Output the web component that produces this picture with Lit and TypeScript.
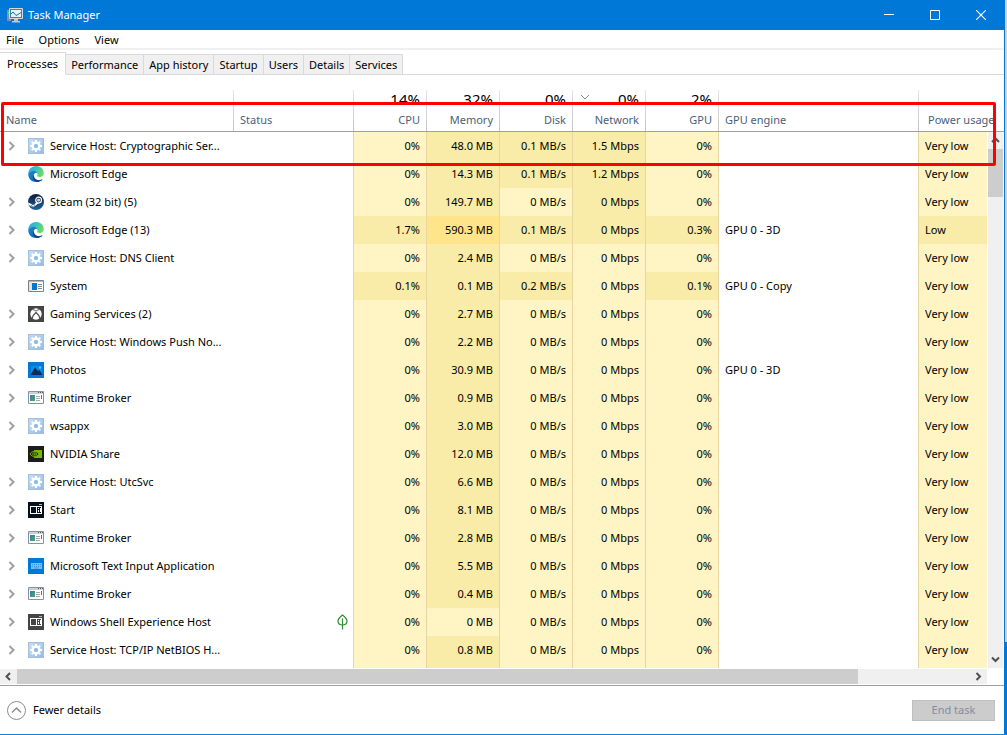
import { LitElement, html, svg, css, nothing } from "lit";
import { customElement } from "lit/decorators.js";
import { classMap } from "lit/directives/class-map.js";

type Level = 0 | 1 | 2;
interface Proc {
  name: string;
  icon: string;
  expandable: boolean;
  leaf?: boolean;
  values: string[];
  levels: Level[];
  engine?: string;
  power: string;
}

const p = (
  name: string,
  icon: string,
  expandable: boolean,
  values: string[],
  levels: Level[],
  engine = "",
  power = "Very low",
  leaf = false
): Proc => ({ name, icon, expandable, values, levels, engine, power, leaf });

const idle = (mem: string) => ["0%", mem, "0 MB/s", "0 Mbps", "0%"];
const base: Level[] = [0, 1, 0, 0, 0];

const PROCESSES: Proc[] = [
  p("Service Host: Cryptographic Ser...", "gear", true, ["0%", "48.0 MB", "0.1 MB/s", "1.5 Mbps", "0%"], [0, 1, 1, 1, 0]),
  p("Microsoft Edge", "edge", false, ["0%", "14.3 MB", "0.1 MB/s", "1.2 Mbps", "0%"], [0, 1, 1, 1, 0]),
  p("Steam (32 bit) (5)", "steam", true, idle("149.7 MB"), [0, 1, 0, 1, 0]),
  p("Microsoft Edge (13)", "edge", true, ["1.7%", "590.3 MB", "0.1 MB/s", "0 Mbps", "0.3%"], [1, 2, 1, 1, 1], "GPU 0 - 3D", "Low"),
  p("Service Host: DNS Client", "gear", true, idle("2.4 MB"), base),
  p("System", "system", false, ["0.1%", "0.1 MB", "0.2 MB/s", "0 Mbps", "0.1%"], [1, 1, 1, 0, 1], "GPU 0 - Copy"),
  p("Gaming Services (2)", "xbox", true, idle("2.7 MB"), base),
  p("Service Host: Windows Push No...", "gear", true, idle("2.2 MB"), base),
  p("Photos", "photos", true, idle("30.9 MB"), base, "GPU 0 - 3D"),
  p("Runtime Broker", "broker", true, idle("0.9 MB"), base),
  p("wsappx", "gear", true, idle("3.0 MB"), base),
  p("NVIDIA Share", "nvidia", false, idle("12.0 MB"), base),
  p("Service Host: UtcSvc", "gear", true, idle("6.6 MB"), base),
  p("Start", "start", true, idle("8.1 MB"), base),
  p("Runtime Broker", "broker", true, idle("2.8 MB"), base),
  p("Microsoft Text Input Application", "keyboard", true, idle("5.5 MB"), base),
  p("Runtime Broker", "broker", true, idle("0.4 MB"), base),
  p("Windows Shell Experience Host", "shell", true, idle("0 MB"), [0, 0, 0, 0, 0], "", "Very low", true),
  p("Service Host: TCP/IP NetBIOS H...", "gear", true, idle("0.8 MB"), base),
];

const METRICS = [
  { label: "CPU", total: "14%" },
  { label: "Memory", total: "32%" },
  { label: "Disk", total: "0%" },
  { label: "Network", total: "0%", sorted: true },
  { label: "GPU", total: "2%" },
];

const TABS = ["Processes", "Performance", "App history", "Startup", "Users", "Details", "Services"];

const panel = (bg: string) => svg`
  <rect width="16" height="16" fill="${bg}"/>
  <path d="M2 4h12v8H2zM3 5v6h5V5zM9 5v6h4V5z" fill="#fff" fill-rule="evenodd"/>
  <path d="M10 6h1v1h-1zM10 8h1v2h-1zM12 6h1v4h-1z" fill="#fff"/>
  <path d="M11 2h3v1h-3z" fill="#aab4c0"/>`;

const ICONS: Record<string, unknown> = {
  gear: svg`
    <defs><linearGradient id="gb" x1="0" y1="0" x2="1" y2="1"><stop offset="0" stop-color="#c3dcf4"/><stop offset="1" stop-color="#92bde8"/></linearGradient></defs>
    <rect x=".5" y=".5" width="15" height="15" fill="url(#gb)" stroke="#a9bfd6"/>
    <g stroke="#fff" stroke-width="2" fill="none"><circle cx="8" cy="8" r="3.400" stroke-width="2.600"/>
    <path d="M8 2v2.500M8 11.500v2.500M2 8h2.500M11.500 8h2.500M3.700 3.700l1.700 1.700M10.600 10.600l1.700 1.700M3.700 12.300l1.700-1.700M10.600 5.400l1.700-1.700"/></g>
    <circle cx="8" cy="8" r="2.100" fill="#8fbaea"/>`,
  edge: svg`
    <defs>
      <linearGradient id="e1" x1="0" y1="0" x2="1" y2=".4"><stop offset="0" stop-color="#2aa5dc"/><stop offset=".5" stop-color="#35c1c5"/><stop offset="1" stop-color="#67dc62"/></linearGradient>
      <linearGradient id="e2" x1="0" y1="0" x2="1" y2="1"><stop offset="0" stop-color="#1b8ad8"/><stop offset="1" stop-color="#1556a8"/></linearGradient>
    </defs>
    <path d="M.2 7.500C.6 3.200 4 .1 8.200.1c4.300 0 7.600 3.200 7.600 6.800 0 2.500-1.900 4.100-4 4.100-1.800 0-2.700-.6-2.700-1.200 0-.4.6-.7.600-1.900C9.700 6.200 8 5 5.800 5 3 5 1 6.300.2 7.500z" fill="url(#e1)"/>
    <path d="M.2 7.500C1 6 3 4.700 5.600 4.700c2.300 0 4.100 1.500 4.100 3.200-.6-.9-1.500-1.200-2.200-1-1.400.6-2 1.900-1.800 3.400.3 3 3.300 4.500 6 3.800 1-.2 1.700-.6 2.300-.9-1.400 1.900-3.500 2.800-5.900 2.800C3.700 16 0 12.500.2 7.500z" fill="url(#e2)"/>
    <path d="M6.200 8.300c-1 3 1.400 6 5 5.900 1.100 0 2-.4 2.700-.9.400-.3.800.1.500.5C13 15.400 10.800 16 9.300 15.900 6 15.500 3.500 12 6.200 8.300z" fill="#133f83"/>`,
  steam: svg`
    <defs><linearGradient id="sb" x1="0" y1="0" x2="0" y2="1"><stop offset="0" stop-color="#10193c"/><stop offset="1" stop-color="#1d6597"/></linearGradient></defs>
    <circle cx="8" cy="8" r="8" fill="url(#sb)"/>
    <path d="M0 8.600l5.200 2.200 3.400-2.400.3-3 4.400 3.200-3.200.8-3 2.500A2.300 2.300 0 0 1 3 12L.6 11z" fill="#fff"/>
    <circle cx="10.600" cy="6.100" r="2.900" fill="#1a2850" stroke="#fff" stroke-width="1.200"/>
    <circle cx="10.600" cy="6.100" r="1.600" fill="#c8d2de"/>
    <circle cx="5.200" cy="11.600" r="1.500" fill="none" stroke="#1b3c68" stroke-width=".7"/>`,
  system: svg`
    <path d="M.5 2.500h15v11H.5z" fill="#fff" stroke="#808080"/><path d="M1 3h14v1H1z" fill="#b8b8b8"/>
    <path d="M1 4h3v9H1z" fill="#e3e3e3"/>
    <path d="M4 5h5v7H4z" fill="#0078d7"/><path d="M10 6.500h4M10 8.500h4M10 10.500h4" stroke="#888"/>`,
  xbox: svg`
    <rect width="16" height="16" fill="#454545"/><circle cx="8" cy="8" r="5.700" fill="#fff"/>
    <path d="M4.500 3.700C6 3.600 7.200 4.500 8 5.200c.8-.7 2-1.600 3.500-1.500" fill="none" stroke="#454545"/>
    <path d="M4 12.600C4.600 10 6.600 7.600 8 6.500c1.400 1.100 3.400 3.500 4 6.100" fill="none" stroke="#454545" stroke-width="1.200"/>`,
  photos: svg`
    <rect width="16" height="16" fill="#0078d7"/><path d="M3 4h11v9H3z" fill="#1389e2"/>
    <path d="M3 12l4-6.500 3 3.500 1.500-1L14 12v1H3z" fill="#0b2b58"/><path d="M11 4.500h2v2h-2z" fill="#5cc8f5"/>`,
  broker: svg`
    <defs><linearGradient id="bb" x1="0" y1="0" x2="1" y2="1"><stop offset="0" stop-color="#3c78b8"/><stop offset="1" stop-color="#4aa866"/></linearGradient></defs>
    <path d="M.5 1.500h15v12H.5z" fill="#fff" stroke="#8b9299"/><path d="M1 2h14v2H1z" fill="#cbd1d7"/>
    <path d="M10 2h1v1h-1zM12 2h1v1h-1zM14 2h1v1h-1z" fill="#4f5a66"/>
    <path d="M2 5h5v6H2z" fill="url(#bb)"/><path d="M8 6.500h4M8 8.500h4M8 10.500h4" stroke="#a8a8a8"/><path d="M13.500 5v4" stroke="#5d7488"/>`,
  nvidia: svg`
    <rect width="16" height="16" fill="#1c1c1c"/><path d="M6 4h8v8H6z" fill="#76b900"/>
    <path d="M2 8c2-3.200 6-3.600 9-.1-2.500 3.600-6.500 3.500-9 .1z" fill="#1c1c1c" stroke="#76b900" stroke-width=".9"/>
    <path d="M4.300 8c1.200-1.700 3.300-1.700 4.700 0-1.300 1.600-3.400 1.600-4.700 0z" fill="none" stroke="#76b900" stroke-width=".9"/><circle cx="6.600" cy="8" r=".8" fill="#76b900"/>`,
  start: panel("#02101f"),
  shell: panel("#454545"),
  keyboard: svg`
    <rect width="16" height="16" fill="#0078d7"/><path d="M3 5h11v6H3z" fill="#7cbef0"/>
    <path d="M4 6.500h9M4 8.500h9" stroke="#3a98e2" stroke-dasharray="1 1"/><path d="M6 10h5" stroke="#3a98e2"/>`,
};

@customElement("app-root")
export class AppRoot extends LitElement {
  static styles = css`
    :host {
      display: block;
      height: 100vh;
      font: 11px/16px "Noto Sans", "Open Sans", sans-serif;
      color: #000;
    }
    * { box-sizing: border-box; }
    button { font: inherit; color: inherit; background: none; border: 0; margin: 0; padding: 0; }
    svg { display: block; flex: none; }
    .desktop { display: flex; height: 100%; background: linear-gradient(#d0d0d0 642px, #0078d7 642px); padding-right: 2px; }
    .window {
      flex: 1; min-width: 0; display: flex; flex-direction: column; background: #fff;
      border-right: 1px solid #0078d7; border-bottom: 1px solid #1883d7;
    }
    .titlebar { display: flex; align-items: center; height: 30px; background: #0078d7; color: #fff; padding-left: 7px; }
    .title { flex: 1; margin: 0 0 0 5px; font-size: 11px; font-weight: 400; }
    .caption { width: 46px; height: 30px; display: grid; place-items: center; }
    .menu { display: flex; height: 20px; padding-left: 6px; gap: 15px; border-bottom: 2px solid #f0f0f0; }
    .menu button { height: 20px; }
    .tabs { display: flex; align-items: flex-end; height: 25px; padding-top: 2px; }
    .tabs::after { content: ""; flex: 1; border-bottom: 1px solid #d9d9d9; }
    .tab { height: 21px; padding: 0 5px; background: #f0f0f0; border: 1px solid #d9d9d9; border-left: 0; }
    .tab.selected { height: 23px; padding: 0 7px; background: #fff; border-bottom-color: #fff; line-height: 20px; }
    .grid { position: relative; flex: 1; min-height: 0; margin-top: 15px; display: flex; }
    .view { flex: 1; min-width: 0; }
    table { width: 100%; table-layout: fixed; border-collapse: separate; border-spacing: 0; }
    .c-status { width: 120px; }
    .c-metric { width: 73px; }
    .c-engine { width: 200px; }
    .c-power { width: 69px; }
    th { height: 42px; padding: 0; font-weight: 400; text-align: left; vertical-align: top; border-bottom: 1px solid #a0a0a0; color: #4c607a; white-space: nowrap;
      background: linear-gradient(#e5e5e5, #c4c4c4) no-repeat 0 0 / 1px 100%; }
    th.first { background: none; }
    .head { display: flex; flex-direction: column; width: 100%; text-align: left; padding: 0 0 0 7px; }
    .first .head { padding-left: 6px; }
    .last .head { padding-left: 10px; }
    .metric .head { text-align: right; padding: 0 6px 0 8px; }
    .total { display: flex; align-items: flex-start; height: 14px; overflow: hidden; font-size: 15px; line-height: 18px; color: #000; }
    .total svg { margin-top: 4px; }
    .total span { flex: 1; }
    .label { height: 27px; line-height: 32px; }
    td { height: 28px; padding: 0; white-space: nowrap; }
    .proc { display: flex; align-items: center; padding-left: 7px; }
    .expander { width: 9px; height: 16px; margin-right: 12px; display: grid; place-items: center; }
    .proc .text { margin-left: 6px; }
    .status { padding-right: 5px; }
    .status svg { margin-left: auto; }
    .num { text-align: right; padding-right: 6px; background: #fff4c4; border-left: 1px solid #e8d5a0; }
    .txt { padding-left: 6px; border-left: 1px solid #e8d5a0; }
    .heat { background: #fff4c4; }
    .l1 { background: #f9eca8; }
    .l2 { background: #ffe48a; }
    .rest { height: 4px; }
    .vscroll { width: 17px; padding-left: 1px; display: flex; flex-direction: column; }
    .headgap { height: 42px; margin-left: -1px; border-bottom: 1px solid #a0a0a0; }
    .vtrack { flex: 1; width: 15px; display: flex; flex-direction: column; background: #f0f0f0; }
    .arrow { flex: none; width: 17px; height: 17px; display: grid; place-items: center; }
    .vtrack .arrow { width: 15px; }
    .vthumb { height: 48px; background: #cdcdcd; }
    .vspace { flex: 1; }
    .hscroll { display: flex; height: 15px; margin: 1px 17px 1px 0; background: #f0f0f0; }
    .hscroll .arrow { height: 15px; }
    .htrack { flex: 1; }
    .hthumb { width: 88.25%; height: 15px; background: #cdcdcd; }
    .highlight { position: absolute; top: 12px; left: 1px; right: 8px; height: 64px; border: 3px solid #fe0000; border-radius: 2px; pointer-events: none; }
    .footer { display: flex; align-items: center; justify-content: space-between; height: 49px; padding: 0 9px 0 7px; border-top: 1px solid #a0a0a0; }
    .fewer { display: flex; align-items: center; gap: 7px; }
    .end { width: 83px; height: 21px; background: #ccc; border: 1px solid #bfbfbf; color: #838ba0; }
  `;

  private chevron(d: string, w: number, h: number, color: string, sw = 2) {
    return html`<svg width=${w} height=${h} viewBox="0 0 ${w} ${h}" fill="none" stroke=${color} stroke-width=${sw}><path d=${d}/></svg>`;
  }

  private row(r: Proc) {
    return html`<tr>
      <td>
        <div class="proc">
          ${r.expandable
            ? html`<button class="expander" aria-label="Expand ${r.name}">${this.chevron("M1.500 1l4 4-4 4", 8, 10, "#a0a0a0")}</button>`
            : html`<span class="expander"></span>`}
          <svg width="16" height="16" viewBox="0 0 16 16" aria-hidden="true">${ICONS[r.icon]}</svg>
          <span class="text">${r.name}</span>
        </div>
      </td>
      <td class="status">
        ${r.leaf
          ? html`<svg width="11" height="16" viewBox="0 0 11 16" fill="none" stroke="#2f8a2f" stroke-width="1.200"><path d="M5.500 1C3 3 1 4.500 1 7s2 4 4.500 4S10 9.500 10 7 8 3 5.500 1zM5.500 4.500v11"/></svg>`
          : nothing}
      </td>
      ${r.values.map((v, i) => html`<td class=${classMap({ num: true, l1: r.levels[i] === 1, l2: r.levels[i] === 2 })}>${v}</td>`)}
      <td class="txt">${r.engine}</td>
      <td class=${classMap({ txt: true, heat: true, l1: r.power === "Low" })}>${r.power}</td>
    </tr>`;
  }

  render() {
    return html`<div class="desktop"><div class="window">
      <header class="titlebar">
        <svg width="16" height="16" viewBox="0 0 16 16" aria-hidden="true">
          <path d="M0 3h4v11H0z" fill="#8a9299"/><path d="M1 5h1v2H1z" fill="#5ee04c"/>
          <path d="M2.500 1.500h13v10h-13z" fill="#2d87b8" stroke="#d8d8d8"/><path d="M4 3h10v7H4z" fill="#e4f4fb"/>
          <path d="M4 7l2-2 3 3.500 2-1 3-2" fill="none" stroke="#1e6f9c"/>
          <path d="M7 12h4v2H7zM5 14h8v1.500H5z" fill="#c4c4c4"/>
        </svg>
        <h1 class="title">Task Manager</h1>
        <button class="caption" aria-label="Minimize"><svg width="10" height="10"><path d="M0 4h10v1H0z" fill="#fff"/></svg></button>
        <button class="caption" aria-label="Maximize"><svg width="10" height="10"><path d="M.5.5h9v9h-9z" fill="none" stroke="#fff"/></svg></button>
        <button class="caption" aria-label="Close"><svg width="10" height="10"><path d="M0 0l10 10M10 0L0 10" stroke="#fff" stroke-width="1.200"/></svg></button>
      </header>
      <nav class="menu"><button>File</button><button>Options</button><button>View</button></nav>
      <div class="tabs" role="tablist">
        ${TABS.map((t, i) => html`<button role="tab" aria-selected=${i === 0} class=${classMap({ tab: true, selected: i === 0 })}>${t}</button>`)}
      </div>
      <main class="grid">
        <div class="view">
          <table>
            <colgroup>
              <col /><col class="c-status" />
              ${METRICS.map(() => html`<col class="c-metric" />`)}
              <col class="c-engine" /><col class="c-power" />
            </colgroup>
            <thead><tr>
              <th class="first"><button class="head"><span class="total"></span><span class="label">Name</span></button></th>
              <th><button class="head"><span class="total"></span><span class="label">Status</span></button></th>
              ${METRICS.map((m) => html`<th class="metric"><button class="head">
                <span class="total">${m.sorted ? this.chevron("M1 1l4 4 4-4", 10, 7, "#76859a", 1) : nothing}<span>${m.total}</span></span>
                <span class="label">${m.label}</span></button></th>`)}
              <th><button class="head"><span class="total"></span><span class="label">GPU engine</span></button></th>
              <th class="last"><button class="head"><span class="total"></span><span class="label">Power usage</span></button></th>
            </tr></thead>
            <tbody>
              ${PROCESSES.map((r) => this.row(r))}
              <tr>
                <td class="rest"></td><td class="rest"></td>
                ${base.map((l) => html`<td class=${classMap({ num: true, rest: true, l1: l === 1 })}></td>`)}
                <td class="txt rest"></td><td class="txt heat rest"></td>
              </tr>
            </tbody>
          </table>
        </div>
        <div class="vscroll">
          <div class="headgap"></div>
          <div class="vtrack">
            <button class="arrow" aria-label="Scroll up">${this.chevron("M1 5l3.500-3.500L8 5", 9, 7, "#505050")}</button>
            <div class="vthumb"></div>
            <div class="vspace"></div>
            <button class="arrow" aria-label="Scroll down">${this.chevron("M1 1.500L4.500 5 8 1.500", 9, 7, "#505050")}</button>
          </div>
        </div>
        <div class="highlight"></div>
      </main>
      <div class="hscroll">
        <button class="arrow" aria-label="Scroll left">${this.chevron("M5 1L1.500 4.500 5 8", 7, 9, "#505050")}</button>
        <div class="htrack"><div class="hthumb"></div></div>
        <button class="arrow" aria-label="Scroll right">${this.chevron("M1.500 1L5 4.500 1.500 8", 7, 9, "#505050")}</button>
      </div>
      <footer class="footer">
        <button class="fewer">
          <svg width="19" height="19" viewBox="0 0 19 19" fill="none" stroke="#8c8c8c"><circle cx="9.500" cy="9.500" r="9"/><path d="M5 11.500L9.500 7l4.500 4.500" stroke-width="1.500"/></svg>
          Fewer details
        </button>
        <button class="end" disabled>End task</button>
      </footer>
    </div></div>`;
  }
}
